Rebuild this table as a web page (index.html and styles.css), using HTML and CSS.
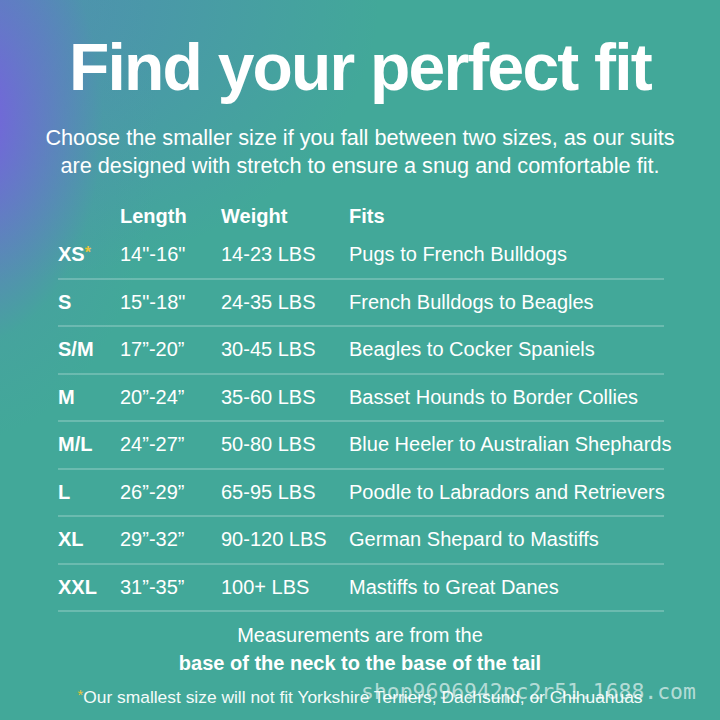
FILE: index.html
```html
<!DOCTYPE html>
<html>
<head>
<meta charset="utf-8">
<link rel="stylesheet" href="styles.css">
</head>
<body>
<main class="page">
  <h1 class="title">Find your perfect fit</h1>
  <p class="intro">Choose the smaller size if you fall between two sizes, as our suits<br>are designed with stretch to ensure a snug and comfortable fit.</p>
  <div class="chart">
    <div class="row head">
      <div class="c size"></div>
      <div class="c len">Length</div>
      <div class="c wt">Weight</div>
      <div class="c fits">Fits</div>
    </div>
    <div class="row">
      <div class="c size">XS<span class="star">*</span></div>
      <div class="c len">14"-16"</div>
      <div class="c wt">14-23 LBS</div>
      <div class="c fits">Pugs to French Bulldogs</div>
    </div>
    <div class="row">
      <div class="c size">S</div>
      <div class="c len">15"-18"</div>
      <div class="c wt">24-35 LBS</div>
      <div class="c fits">French Bulldogs to Beagles</div>
    </div>
    <div class="row">
      <div class="c size">S/M</div>
      <div class="c len">17”-20”</div>
      <div class="c wt">30-45 LBS</div>
      <div class="c fits">Beagles to Cocker Spaniels</div>
    </div>
    <div class="row">
      <div class="c size">M</div>
      <div class="c len">20”-24”</div>
      <div class="c wt">35-60 LBS</div>
      <div class="c fits">Basset Hounds to Border Collies</div>
    </div>
    <div class="row">
      <div class="c size">M/L</div>
      <div class="c len">24”-27”</div>
      <div class="c wt">50-80 LBS</div>
      <div class="c fits">Blue Heeler to Australian Shephards</div>
    </div>
    <div class="row">
      <div class="c size">L</div>
      <div class="c len">26”-29”</div>
      <div class="c wt">65-95 LBS</div>
      <div class="c fits">Poodle to Labradors and Retrievers</div>
    </div>
    <div class="row">
      <div class="c size">XL</div>
      <div class="c len">29”-32”</div>
      <div class="c wt">90-120 LBS</div>
      <div class="c fits">German Shepard to Mastiffs</div>
    </div>
    <div class="row">
      <div class="c size">XXL</div>
      <div class="c len">31”-35”</div>
      <div class="c wt">100+ LBS</div>
      <div class="c fits">Mastiffs to Great Danes</div>
    </div>
  </div>
  <p class="note">Measurements are from the<br><b>base of the neck to the base of the tail</b></p>
  <p class="foot"><span class="star">*</span>Our smallest size will not fit Yorkshire Terriers, Dachsund, or Chihuahuas</p>
  <div class="watermark">shop9696942pc2r51.1688.com</div>
</main>
</body>
</html>
```

FILE: styles.css
```css
html, body {
  margin: 0;
  padding: 0;
}
body {
  width: 720px;
  height: 720px;
  overflow: hidden;
  font-family: "Liberation Sans", Arial, sans-serif;
  color: #fff;
  background-color: #42a899;
  background-image:
    radial-gradient(ellipse 190px 320px at -30px 120px, rgba(122, 92, 228, 1) 0%, rgba(110, 110, 210, 0.7) 35%, rgba(80, 150, 170, 0.25) 70%, rgba(66, 168, 153, 0) 100%),
    radial-gradient(ellipse 380px 280px at 0px 0px, rgba(90, 120, 200, 0.55) 0%, rgba(66, 168, 153, 0) 100%);
}
.page {
  position: relative;
  width: 720px;
  height: 720px;
  padding-top: 34px;
  box-sizing: border-box;
}
.title {
  margin: 0;
  text-align: center;
  font-size: 66px;
  line-height: 66px;
  font-weight: 700;
  letter-spacing: -1.8px;
}
.intro {
  margin: 24px 0 0;
  text-align: center;
  font-size: 21.7px;
  line-height: 28px;
}
.chart {
  margin: 25px 56px 0 58px;
}
.row {
  display: flex;
  align-items: center;
  height: 45.5px;
  border-bottom: 2px solid rgba(255, 255, 255, 0.22);
  font-size: 20px;
}
.row.head {
  height: 27px;
  border-bottom: none;
  font-weight: 700;
  align-items: flex-start;
}
.c {
  flex: none;
  white-space: nowrap;
}
.c.size {
  width: 62px;
  font-weight: 700;
}
.c.len {
  width: 101px;
}
.c.wt {
  width: 128px;
}
.c.fits {
  width: 318px;
  overflow: visible;
}
.star {
  color: #e8c43a;
  font-size: 0.8em;
  vertical-align: 0.2em;
}
.note {
  margin: 9px 0 0;
  text-align: center;
  font-size: 20px;
  line-height: 28px;
}
.note b {
  font-weight: 700;
}
.foot {
  margin: 6px 0 0;
  text-align: center;
  font-size: 17.4px;
  line-height: 24px;
  color: #f4fbf9;
}
.foot .star {
  font-size: 0.85em;
}
.watermark {
  position: absolute;
  left: 361px;
  top: 677px;
  font-family: "DejaVu Sans Mono", monospace;
  font-size: 21.4px;
  line-height: 30px;
  color: rgba(255, 255, 255, 0.62);
  white-space: nowrap;
}
```
